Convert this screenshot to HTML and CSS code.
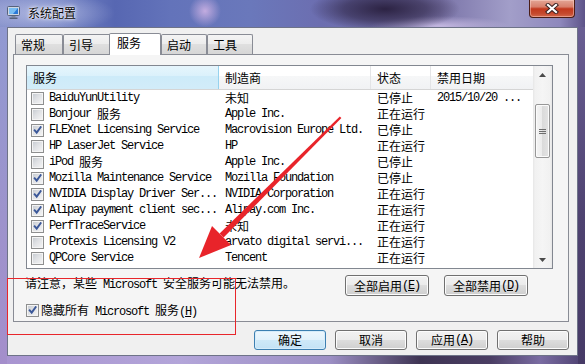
FILE: index.html
```html
<!DOCTYPE html>
<html lang="zh-CN">
<head>
<meta charset="utf-8">
<title>系统配置</title>
<link rel="stylesheet" href="styles.css">
</head>
<body>
<div class="window">
  <div class="titlebar">
    <svg class="appicon" width="13" height="13" viewBox="0 0 13 13">
      <rect x="0.5" y="0.5" width="12" height="9" rx="1" fill="#cfd6e2" stroke="#56627c"/>
      <rect x="2" y="2" width="9" height="6" fill="#2a78d6"/>
      <path d="M2 2h9l-5 6H2z" fill="#79bdf2"/>
      <rect x="4.5" y="10" width="4" height="1.5" fill="#7d879a"/>
      <rect x="2.5" y="11.5" width="8" height="1.5" fill="#56627c"/>
    </svg>
    <span class="title">系统配置</span>
    <div class="close">
      <svg width="14" height="11" viewBox="0 0 14 11">
        <path d="M3 2l8 7M11 2l-8 7" stroke="#3b2222" stroke-width="4.2" stroke-linecap="square"/>
        <path d="M3 2l8 7M11 2l-8 7" stroke="#ffffff" stroke-width="2.2" stroke-linecap="square"/>
      </svg>
    </div>
  </div>
  <div class="client">
    <div class="tabs">
      <div class="tab">常规</div>
      <div class="tab t2">引导</div>
      <div class="tab active">服务</div>
      <div class="tab narrow">启动</div>
      <div class="tab narrow">工具</div>
    </div>
    <div class="panel">
      <div class="list">
        <div class="list-main">
          <div class="header">
            <div class="hcell c1 sorted">服务</div>
            <div class="hcell c2">制造商</div>
            <div class="hcell c3">状态</div>
            <div class="hcell c4">禁用日期</div>
          </div>
          <div class="rows">
            <div class="row"><div class="cell c1"><span class="cb"></span><span class="mono">BaiduYunUtility</span></div><div class="cell c2">未知</div><div class="cell c3">已停止</div><div class="cell c4 mono">2015/10/20 ...</div></div>
            <div class="row"><div class="cell c1"><span class="cb"></span><span class="mono">Bonjour <span class="cj ib">服务</span></span></div><div class="cell c2 mono">Apple Inc.</div><div class="cell c3">正在运行</div><div class="cell c4"></div></div>
            <div class="row"><div class="cell c1"><span class="cb on"></span><span class="mono">FLEXnet Licensing Service</span></div><div class="cell c2 mono">Macrovision Europe Ltd.</div><div class="cell c3">已停止</div><div class="cell c4"></div></div>
            <div class="row"><div class="cell c1"><span class="cb"></span><span class="mono">HP LaserJet Service</span></div><div class="cell c2 mono">HP</div><div class="cell c3">正在运行</div><div class="cell c4"></div></div>
            <div class="row"><div class="cell c1"><span class="cb"></span><span class="mono">iPod <span class="cj ib">服务</span></span></div><div class="cell c2 mono">Apple Inc.</div><div class="cell c3">已停止</div><div class="cell c4"></div></div>
            <div class="row"><div class="cell c1"><span class="cb on"></span><span class="mono">Mozilla Maintenance Service</span></div><div class="cell c2 mono">Mozilla Foundation</div><div class="cell c3">已停止</div><div class="cell c4"></div></div>
            <div class="row"><div class="cell c1"><span class="cb on"></span><span class="mono">NVIDIA Display Driver Ser...</span></div><div class="cell c2 mono">NVIDIA Corporation</div><div class="cell c3">正在运行</div><div class="cell c4"></div></div>
            <div class="row"><div class="cell c1"><span class="cb on"></span><span class="mono">Alipay payment client sec...</span></div><div class="cell c2 mono">Alipay.com Inc.</div><div class="cell c3">正在运行</div><div class="cell c4"></div></div>
            <div class="row"><div class="cell c1"><span class="cb on"></span><span class="mono">PerfTraceService</span></div><div class="cell c2">未知</div><div class="cell c3">正在运行</div><div class="cell c4"></div></div>
            <div class="row"><div class="cell c1"><span class="cb"></span><span class="mono">Protexis Licensing V2</span></div><div class="cell c2 mono">arvato digital servi...</div><div class="cell c3">正在运行</div><div class="cell c4"></div></div>
            <div class="row"><div class="cell c1"><span class="cb"></span><span class="mono">QPCore Service</span></div><div class="cell c2 mono">Tencent</div><div class="cell c3">正在运行</div><div class="cell c4"></div></div>
            <div class="row"><div class="cell c1"><span class="cb"></span></div></div>
          </div>
        </div>
        <div class="vscroll">
          <div class="sb-arrow">
            <svg width="7" height="4" viewBox="0 0 7 4"><path d="M3.5 0L7 4H0z" fill="#4a4a4a"/></svg>
          </div>
          <div class="thumb">
            <svg width="7" height="7" viewBox="0 0 7 7">
              <path d="M0 1.5h7M0 3.5h7M0 5.5h7" stroke="#6e6e6e" stroke-width="1"/>
            </svg>
          </div>
          <div class="sb-arrow down">
            <svg width="7" height="4" viewBox="0 0 7 4"><path d="M0 0h7L3.5 4z" fill="#4a4a4a"/></svg>
          </div>
        </div>
      </div>
      <div class="below">
        <div class="below-left">
          <div class="note mono"><span class="cj">请注意，某些</span> Microsoft <span class="cj">安全服务可能无法禁用。</span></div>
          <div class="hide"><span class="cb on"></span><span class="mono"><span class="cj">隐藏所有</span> Microsoft <span class="cj">服务</span>(<u>H</u>)</span></div>
        </div>
        <div class="below-right">
          <button class="btn small">全部启用<span class="mono">(<u>E</u>)</span></button>
          <button class="btn small">全部禁用<span class="mono">(<u>D</u>)</span></button>
        </div>
      </div>
    </div>
    <div class="actions">
      <button class="btn default">确定</button>
      <button class="btn">取消</button>
      <button class="btn">应用<span class="mono">(<u>A</u>)</span></button>
      <button class="btn">帮助</button>
    </div>
  </div>
  <div class="annot-box"></div>
  <svg class="arrow" width="585" height="364" viewBox="0 0 585 364">
    <polygon points="339.8,116.4 341.4,118 223.6,237.6 219.6,233.6" fill="#e8242a"/>
    <polygon points="199,258 212,226 231,245" fill="#e8242a"/>
  </svg>
</div>
</body>
</html>
```
FILE: styles.css
```css
html, body {
  margin: 0;
  padding: 0;
}
body {
  font-family: "Noto Sans CJK SC", sans-serif;
  font-size: 12px;
  color: #000;
}
.window {
  position: relative;
  width: 585px;
  height: 364px;
  overflow: hidden;
  display: flex;
  flex-direction: column;
  background:
    linear-gradient(180deg, #8f9ad2 0, #9d93cc 60%, #a48ecb 100%) left top / 7px 100% no-repeat,
    linear-gradient(180deg, #6d6298 0, #4e4270 60%, #463a66 100%) right top / 7px 100% no-repeat,
    linear-gradient(90deg, #a894d0 0, #b3a5d9 180px, #9c8fc4 330px, #3e3453 420px, #4a3d63 490px, #7a6ca2 540px, #4b3f6e 585px) left bottom / 100% 8px no-repeat,
    #8a84b8;
}
.titlebar {
  height: 27px;
  flex: none;
  display: flex;
  align-items: flex-start;
  padding-left: 7px;
  background:
    radial-gradient(ellipse 75px 22px at 385px 9px, rgba(38, 28, 58, 0.92) 0, rgba(38, 28, 58, 0.55) 55%, rgba(38, 28, 58, 0) 100%),
    radial-gradient(ellipse 70px 10px at 440px 26px, rgba(214, 200, 238, 0.8), rgba(214, 200, 238, 0)),
    radial-gradient(circle 16px at 205px 11px, rgba(205, 178, 228, 0.9), rgba(205, 178, 228, 0)),
    radial-gradient(ellipse 70px 20px at 45px 13px, rgba(228, 230, 250, 0.5), rgba(228, 230, 250, 0)),
    linear-gradient(90deg, #8691cb 0, #7383c4 60px, #5767b2 115px, #6373ba 170px, #6a78bb 250px, #6c6eb0 320px, #7a74a8 440px, #a29ec9 510px, #8e88bc 560px, #5d5388 585px);
}
.appicon {
  margin-top: 6px;
  flex: none;
}
.title {
  margin-left: 8px;
  margin-top: 5px;
  line-height: 16px;
  font-size: 12px;
  color: #050505;
  text-shadow: 0 0 5px #eef0ff, 0 0 3px #eef0ff, 0 0 1px #fff;
}
.close {
  margin-left: auto;
  margin-right: 10px;
  width: 46px;
  height: 18px;
  box-sizing: border-box;
  border: 1px solid #4a1d16;
  border-top: 0;
  border-radius: 0 0 4px 4px;
  background: linear-gradient(180deg, #e3a595 0, #d8806c 40%, #c2381d 52%, #c54a2e 80%, #d3684d 100%);
  box-shadow: inset 0 0 0 1px rgba(255, 220, 210, 0.45);
  display: flex;
  align-items: center;
  justify-content: center;
}
.client {
  flex: 1;
  min-height: 0;
  margin: 0 7px 8px;
  border: 1px solid #6e7388;
  background: #f0f0f0;
  padding: 5px 8px 0 5px;
  display: flex;
  flex-direction: column;
}
.tabs {
  display: flex;
  align-items: flex-end;
  height: 21px;
  padding-left: 2px;
  flex: none;
}
.tab {
  box-sizing: border-box;
  height: 20px;
  width: 48px;
  border: 1px solid #898c95;
  border-bottom: 0;
  border-radius: 2px 2px 0 0;
  background: linear-gradient(180deg, #f4f4f4 0, #ececec 50%, #dfdfdf 50%, #d6d6d6 100%);
  padding-left: 5px;
  line-height: 19px;
  white-space: nowrap;
}
.t2 {
  margin-right: -2px;
}
.tab.active {
  position: relative;
  z-index: 2;
  height: 22px;
  width: 52px;
  margin-bottom: -1px;
  background: #fff;
  padding-left: 7px;
  line-height: 18px;
}
.tab.narrow {
  width: 46px;
}
.panel {
  box-sizing: border-box;
  height: 268px;
  flex: none;
  border: 1px solid #898c95;
  background: #f5f5f5;
  padding: 10px 0 0 12px;
}
.list {
  box-sizing: border-box;
  width: 527px;
  height: 204px;
  border: 1px solid #828790;
  background: #fff;
  display: flex;
  overflow: hidden;
}
.list-main {
  flex: 1;
  min-width: 0;
  overflow: hidden;
}
.header {
  box-sizing: border-box;
  display: flex;
  height: 24px;
  border-bottom: 1px solid #d5d5d5;
  background: linear-gradient(180deg, #ffffff 0, #ffffff 45%, #f6f7f8 45%, #f1f2f4 100%);
}
.hcell {
  box-sizing: border-box;
  border-right: 1px solid #e3e4e6;
  padding-left: 6px;
  line-height: 23px;
  white-space: nowrap;
  overflow: hidden;
}
.hcell.sorted {
  background: linear-gradient(180deg, #e6f5fc 0, #daf1fb 45%, #cdebf9 45%, #d2ecf9 100%);
  border-right-color: #96d2ee;
}
.header .c4 {
  border-right: 0;
}
.c1 {
  width: 192px;
  flex: none;
}
.c2 {
  width: 152px;
  flex: none;
}
.c3 {
  width: 60px;
  flex: none;
}
.c4 {
  flex: 1;
  min-width: 0;
}
.row {
  display: flex;
  height: 16px;
  line-height: 16px;
}
.cell {
  box-sizing: border-box;
  white-space: nowrap;
  overflow-x: clip;
  overflow-y: visible;
}
.row .c1 {
  display: flex;
  align-items: center;
  padding-left: 4px;
}
.row .c1 .mono {
  line-height: 16px;
  white-space: nowrap;
}
.row .c2,
.row .c3,
.row .c4 {
  padding-left: 6px;
}
.cb {
  position: relative;
  box-sizing: border-box;
  flex: none;
  width: 13px;
  height: 13px;
  margin-right: 5px;
  border: 1px solid #8e8f8f;
  background: linear-gradient(135deg, #c3c8cf 0, #dfe1e4 45%, #f6f6f6 100%);
  box-shadow: inset 0 0 0 1px #f4f4f4;
}
.cb.on::after {
  content: "";
  position: absolute;
  left: 1px;
  top: 1px;
  width: 9px;
  height: 9px;
  background: #3b5899;
  clip-path: polygon(4% 52%, 20% 40%, 40% 62%, 84% 4%, 99% 16%, 42% 96%);
}
.mono {
  font-family: "Liberation Mono", monospace;
  letter-spacing: -1.2px;
}
.cj {
  font-family: "Noto Sans CJK SC", sans-serif;
  letter-spacing: 0;
}
.cj.ib {
  display: inline-block;
  height: 16px;
  line-height: 16px;
  vertical-align: top;
}
.vscroll {
  width: 19px;
  flex: none;
  display: flex;
  flex-direction: column;
  align-items: center;
  background: linear-gradient(90deg, #e6e6e6 0, #f1f1f1 2px, #f5f5f5 50%, #f1f1f1 calc(100% - 2px), #e6e6e6 100%);
}
.sb-arrow {
  height: 17px;
  width: 100%;
  display: flex;
  align-items: center;
  justify-content: center;
  flex: none;
}
.sb-arrow.down {
  margin-top: auto;
}
.thumb {
  box-sizing: border-box;
  margin-top: 21px;
  width: 15px;
  height: 54px;
  border: 1px solid #979797;
  border-radius: 2px;
  background: linear-gradient(90deg, #f4f4f4 0, #ebebeb 50%, #dbdbdb 50%, #e4e4e4 100%);
  box-shadow: inset 0 0 0 1px #fbfbfb;
  display: flex;
  align-items: center;
  justify-content: center;
}
.below {
  display: flex;
  justify-content: space-between;
  margin-top: 6px;
  padding-right: 40px;
}
.note {
  margin-left: -1px;
  line-height: 16px;
  white-space: nowrap;
}
.hide {
  display: flex;
  align-items: center;
  height: 16px;
  margin-top: 9px;
  white-space: nowrap;
}
.hide .cb {
  margin-right: 2px;
}
.below-right {
  display: flex;
  gap: 15px;
}
.btn {
  box-sizing: border-box;
  margin: 0;
  padding: 0;
  border: 1px solid #707070;
  border-radius: 3px;
  background: linear-gradient(180deg, #f2f2f2 0, #ebebeb 50%, #dddddd 50%, #cfcfcf 100%);
  box-shadow: inset 0 0 0 1px #fcfcfc;
  font-family: "Noto Sans CJK SC", sans-serif;
  font-size: 12px;
  color: #000;
  line-height: 1;
  display: flex;
  align-items: center;
  justify-content: center;
}
.btn.small {
  width: 84px;
  height: 21px;
}
.actions {
  display: flex;
  justify-content: flex-end;
  gap: 9px;
  margin-top: 8px;
  flex: none;
}
.actions .btn {
  width: 72px;
  height: 20px;
}
.btn.default {
  border-color: #3c7fb1;
  background: linear-gradient(180deg, #eef7fd 0, #e1f1fb 50%, #cfe9f8 50%, #c3e2f5 100%);
  box-shadow: inset 0 0 0 1px #d6ecfa;
}
.annot-box {
  position: absolute;
  left: 7px;
  top: 278px;
  width: 229px;
  height: 57px;
  box-sizing: border-box;
  border: 1px solid #e8262b;
  pointer-events: none;
}
.arrow {
  position: absolute;
  left: 0;
  top: 0;
  pointer-events: none;
}
```
